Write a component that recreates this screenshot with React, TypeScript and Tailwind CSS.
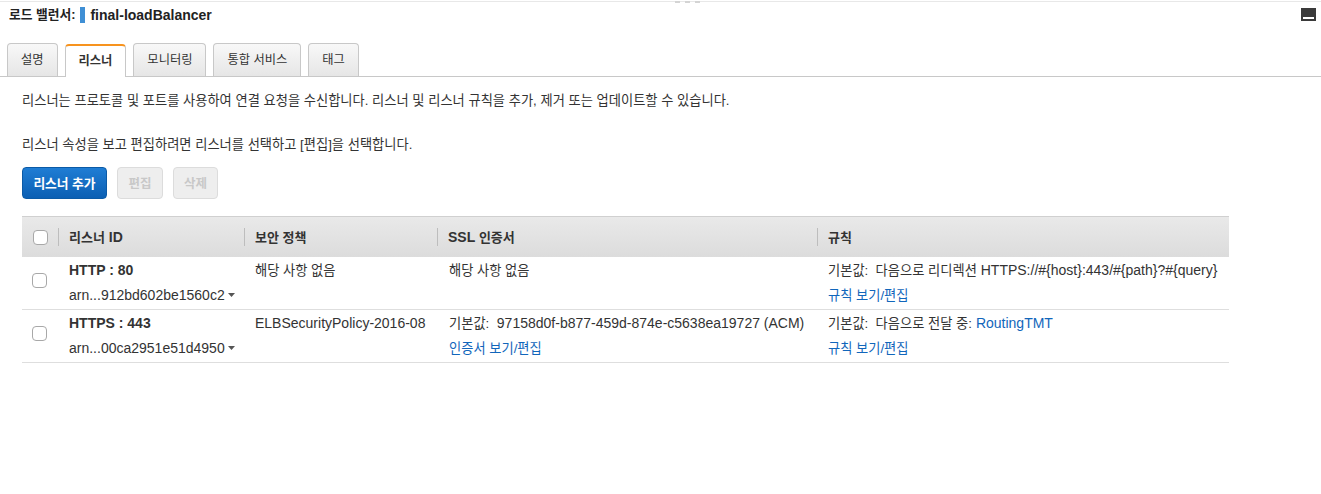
import type { ReactNode } from 'react';

// Korean glyphs from Noto CJK run wide; size them to match the console font
const K = ({ children, size = 'text-[13.25px]' }: { children: ReactNode; size?: string }) => (
    <span className={size}>{children}</span>
);

const Caret = () => (
    <svg className="inline-block ml-[3px] mb-[2px]" width="7" height="4" viewBox="0 0 7 4"><path d="M0 0h7L3.5 4z" fill="#555" /></svg>
);

const Checkbox = () => (
    <span className="block w-[15px] h-[15px] rounded-[4px] border border-[#a8a8a8] bg-white" />
);

const Link = ({ children }: { children: ReactNode }) => (
    <span className="text-[#1166bb]">{children}</span>
);

const tabs = ['설명', '리스너', '모니터링', '통합 서비스', '태그'];

const HeaderCell = ({ children }: { children: ReactNode }) => (
    <div className="flex items-center h-full">
        <span className="w-px h-[18px] bg-[#bdbdbd]" />
        <span className="pl-[10px] font-bold">{children}</span>
    </div>
);

interface Row {
    protocol: string;
    arn: string;
    policy: ReactNode;
    ssl: ReactNode;
    sslLink?: string;
    rule: ReactNode;
}

const rows: Row[] = [
    {
        protocol: 'HTTP : 80',
        arn: 'arn...912bd602be1560c2',
        policy: <K>해당 사항 없음</K>,
        ssl: <K>해당 사항 없음</K>,
        rule: <><K>기본값:&nbsp; 다음으로 리디렉션</K> HTTPS://#{'{'}host{'}'}:443/#{'{'}path{'}'}?#{'{'}query{'}'}</>,
    },
    {
        protocol: 'HTTPS : 443',
        arn: 'arn...00ca2951e51d4950',
        policy: 'ELBSecurityPolicy-2016-08',
        ssl: <><K>기본값:&nbsp;</K> 97158d0f-b877-459d-874e-c5638ea19727 (ACM)</>,
        sslLink: '인증서 보기/편집',
        rule: <><K>기본값:&nbsp; 다음으로 전달 중:</K> <Link>RoutingTMT</Link></>,
    },
];

export default function App() {
    return (
        <div className="relative min-h-[494px] bg-white text-[14px] text-[#333] font-['Liberation_Sans','Noto_Sans_CJK_KR',sans-serif]">
            <div className="absolute top-0 left-[675px] flex gap-[5px]">
                <span className="w-[5px] h-[2px] bg-[#d4d4d4]" />
                <span className="w-[5px] h-[2px] bg-[#d4d4d4]" />
                <span className="w-[5px] h-[2px] bg-[#d4d4d4]" />
            </div>

            <div className="mt-[1px] border-t border-[#e8e8e8] h-[26px] flex items-center pl-[9px] pr-[5px]">
                <span className="font-bold text-[#222] leading-[16px]"><K size="text-[12.75px]">로드 밸런서:</K></span>
                <span className="ml-[5px] w-[5px] h-[16px] bg-[#3f8fd5]" />
                <span className="ml-[5px] font-bold text-[#222] leading-[16px]">final-loadBalancer</span>
                <span className="ml-auto relative w-[15px] h-[13px] bg-[#3a3a3a]">
                    <span className="absolute left-[2px] right-[2px] bottom-[2px] h-[2px] bg-white" />
                </span>
            </div>

            <div className="mt-[16px] flex items-end gap-[7px] pl-[7px] border-b border-[#c8c8c8]">
                {tabs.map((t, i) => (
                    <div
                        key={t}
                        className={
                            i === 1
                                ? 'h-[33px] -mb-px px-[13px] flex items-center rounded-t-[4px] border border-b-0 border-[#c8c8c8] border-t-2 border-t-[#f7931e] bg-white font-bold'
                                : 'h-[33px] px-[13px] flex items-center rounded-t-[4px] border border-b-0 border-[#c8c8c8] bg-gradient-to-b from-[#f8f8f8] to-[#e6e6e6]'
                        }
                    >
                        <K size="text-[12.25px]">{t}</K>
                    </div>
                ))}
            </div>

            <div className="px-[22px]">
                <p className="mt-[13px] h-[20px] leading-[20px]"><K>리스너는 프로토콜 및 포트를 사용하여 연결 요청을 수신합니다. 리스너 및 리스너 규칙을 추가, 제거 또는 업데이트할 수 있습니다.</K></p>
                <p className="mt-[24px] h-[20px] leading-[20px]"><K>리스너 속성을 보고 편집하려면 리스너를 선택하고 [편집]을 선택합니다.</K></p>

                <div className="mt-[13px] flex gap-[10px]">
                    <button className="h-[32px] w-[85px] rounded-[4px] border border-[#0b5aa6] bg-gradient-to-b from-[#1f7dd4] to-[#0b5fb3] text-white font-bold">
                        <K size="text-[12.75px]">리스너 추가</K>
                    </button>
                    <button className="h-[32px] w-[46px] rounded-[4px] border border-[#dcdcdc] bg-[#eeeeee] text-[#c8c8c8] font-bold">
                        <K size="text-[12.5px]">편집</K>
                    </button>
                    <button className="h-[32px] w-[45px] rounded-[4px] border border-[#dcdcdc] bg-[#eeeeee] text-[#c8c8c8] font-bold">
                        <K size="text-[12.5px]">삭제</K>
                    </button>
                </div>

                <div className="mt-[17px] w-[1207px]">
                    <div className="grid grid-cols-[36px_186px_193px_380px_412px] h-[41px] border-t border-[#d0d0d0] bg-gradient-to-b from-[#e9e9e9] to-[#dcdcdc]">
                        <div className="flex items-center pl-[11px]"><Checkbox /></div>
                        <HeaderCell><K size="text-[13px]">리스너</K> ID</HeaderCell>
                        <HeaderCell><K size="text-[13px]">보안 정책</K></HeaderCell>
                        <HeaderCell>SSL <K size="text-[13px]">인증서</K></HeaderCell>
                        <HeaderCell><K size="text-[13px]">규칙</K></HeaderCell>
                    </div>

                    {rows.map((r) => (
                        <div key={r.arn} className="grid grid-cols-[36px_186px_193px_380px_412px] border-b border-[#dedede] pt-[1px] pb-[1px]">
                            <div className="pl-[10px] pt-[15px]"><Checkbox /></div>
                            <div className="pl-[11px]">
                                <div className="h-[25px] leading-[25px] font-bold">{r.protocol}</div>
                                <div className="h-[25px] leading-[25px]">{r.arn}<Caret /></div>
                            </div>
                            <div className="pl-[11px]">
                                <div className="h-[25px] leading-[25px]">{r.policy}</div>
                            </div>
                            <div className="pl-[12px]">
                                <div className="h-[25px] leading-[25px]">{r.ssl}</div>
                                {r.sslLink && <div className="h-[25px] leading-[25px]"><Link><K>{r.sslLink}</K></Link></div>}
                            </div>
                            <div className="pl-[11px]">
                                <div className="h-[25px] leading-[25px] whitespace-nowrap">{r.rule}</div>
                                <div className="h-[25px] leading-[25px]"><Link><K>규칙 보기/편집</K></Link></div>
                            </div>
                        </div>
                    ))}
                </div>
            </div>
        </div>
    );
}
